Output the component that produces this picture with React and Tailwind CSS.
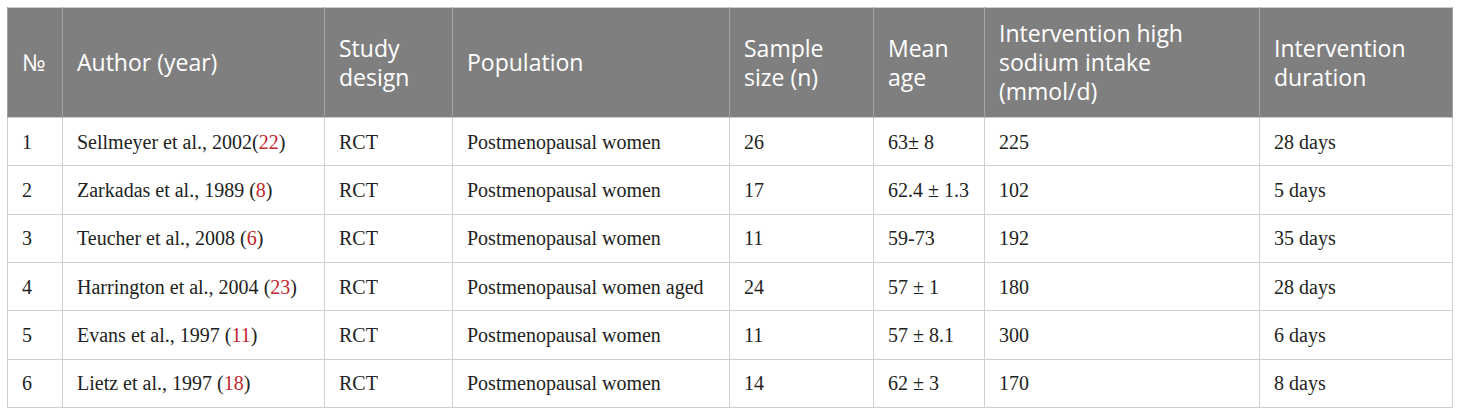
import React from "react";

const cols = [55, 262, 128, 277, 144, 111, 275, 193];
const headerLines = [
  ["№"],
  ["Author (year)"],
  ["Study", "design"],
  ["Population"],
  ["Sample", "size (n)"],
  ["Mean", "age"],
  ["Intervention high", "sodium intake", "(mmol/d)"],
  ["Intervention", "duration"],
];

const rows = [
  ["1", ["Sellmeyer et al., 2002", "22"], "RCT", "Postmenopausal women", "26", "63± 8", "225", "28 days"],
  ["2", ["Zarkadas et al., 1989 ", "8"], "RCT", "Postmenopausal women", "17", "62.4 ± 1.3", "102", "5 days"],
  ["3", ["Teucher et al., 2008 ", "6"], "RCT", "Postmenopausal women", "11", "59-73", "192", "35 days"],
  ["4", ["Harrington et al., 2004 ", "23"], "RCT", "Postmenopausal women aged", "24", "57 ± 1", "180", "28 days"],
  ["5", ["Evans et al., 1997 ", "11"], "RCT", "Postmenopausal women", "11", "57 ± 8.1", "300", "6 days"],
  ["6", ["Lietz et al., 1997 ", "18"], "RCT", "Postmenopausal women", "14", "62 ± 3", "170", "8 days"],
];

export default function App() {
  return (
    <div className="bg-white p-[7px]" style={{ width: 1460 }}>
      <table className="table-fixed border-collapse w-[1445px] border border-[#cfcfcf]">
        <colgroup>
          {cols.map((w, i) => (
            <col key={i} style={{ width: w }} />
          ))}
        </colgroup>
        <thead>
          <tr className="h-[110px] bg-[#7f7f7f]">
            {headerLines.map((lines, i) => (
              <th
                key={i}
                className="border-x border-[#a3a3a3] px-[14px] text-left align-middle font-normal text-white text-[23px] leading-[29px] font-['Open_Sans',sans-serif]"
              >
                {lines.map((l, j) => (
                  <div key={j} className="whitespace-nowrap">{l}</div>
                ))}
              </th>
            ))}
          </tr>
        </thead>
        <tbody>
          {rows.map((r, ri) => (
            <tr key={ri} className="h-[48.33px]">
              {r.map((c, ci) => (
                <td
                  key={ci}
                  className="border border-[#cfcfcf] px-[14px] align-middle text-[20px] leading-[24px] text-[#222222] font-['Liberation_Serif',serif] whitespace-nowrap"
                >
                  {Array.isArray(c) ? (
                    <>
                      {c[0]}(<span className="text-[#c0262e]">{c[1]}</span>)
                    </>
                  ) : (
                    c
                  )}
                </td>
              ))}
            </tr>
          ))}
        </tbody>
      </table>
    </div>
  );
}
